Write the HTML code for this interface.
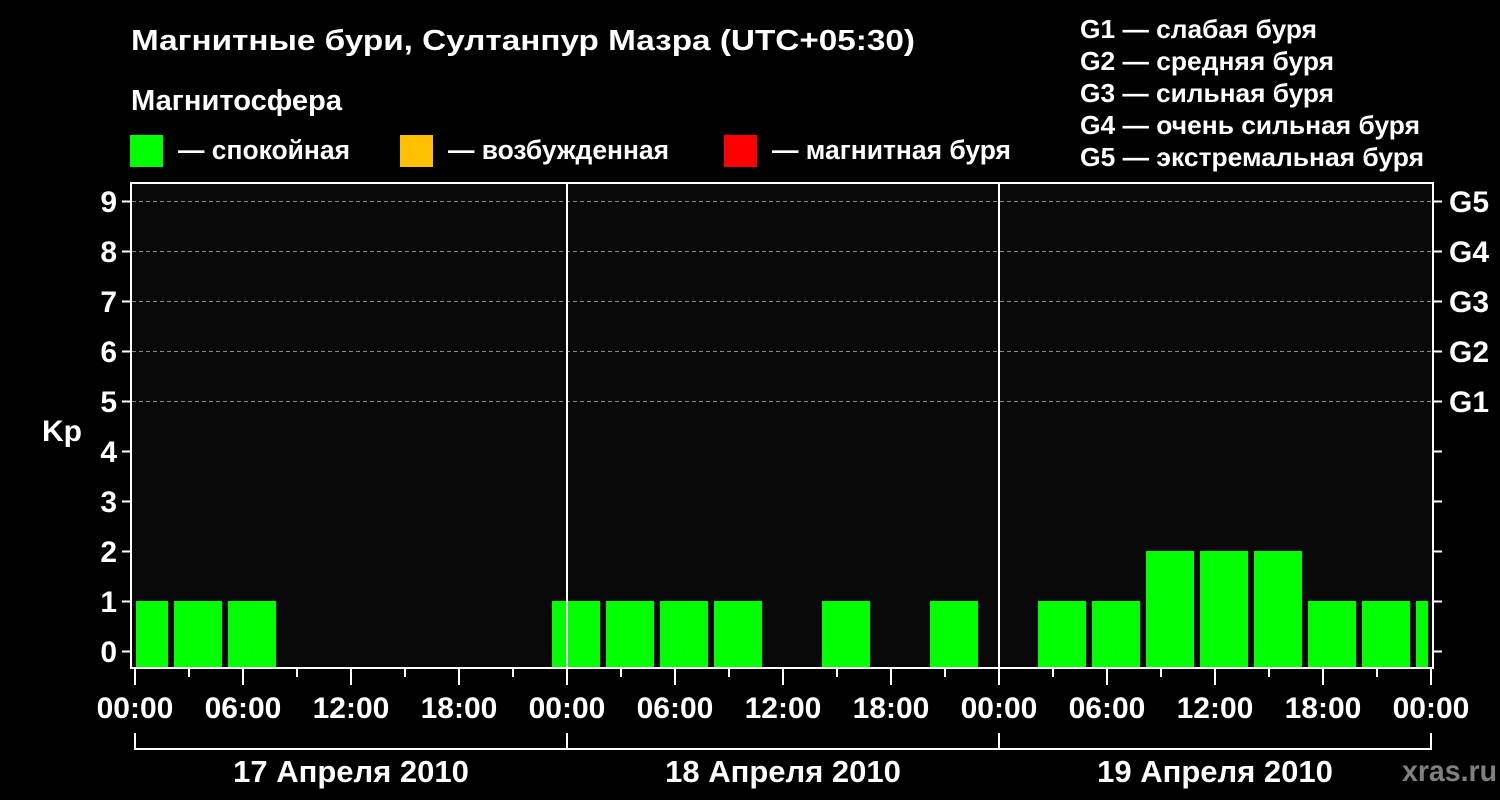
<!DOCTYPE html>
<html><head><meta charset="utf-8"><style>
html,body{margin:0;padding:0;background:#000;}
svg{display:block;}
text{font-family:"Liberation Sans",Arial,sans-serif;font-weight:bold;fill:#fff;}
</style></head><body>
<svg width="1500" height="800" viewBox="0 0 1500 800" xmlns="http://www.w3.org/2000/svg">
<rect width="1500" height="800" fill="#000"/>
<text x="131" y="50" font-size="29" textLength="784" lengthAdjust="spacingAndGlyphs">Магнитные бури, Султанпур Мазра (UTC+05:30)</text>
<text x="131" y="110" font-size="29" textLength="211" lengthAdjust="spacingAndGlyphs">Магнитосфера</text>
<rect x="130" y="135" width="33" height="32" fill="#00ff00"/>
<rect x="400" y="135" width="33" height="32" fill="#ffc000"/>
<rect x="724" y="135" width="33" height="32" fill="#ff0000"/>
<text x="178" y="159" font-size="27" textLength="172" lengthAdjust="spacingAndGlyphs">— спокойная</text>
<text x="448" y="159" font-size="27" textLength="221" lengthAdjust="spacingAndGlyphs">— возбужденная</text>
<text x="772" y="159" font-size="27" textLength="239" lengthAdjust="spacingAndGlyphs">— магнитная буря</text>
<g font-size="26">
<text x="1080" y="38" textLength="237" lengthAdjust="spacingAndGlyphs">G1 — слабая буря</text>
<text x="1080" y="70" textLength="254" lengthAdjust="spacingAndGlyphs">G2 — средняя буря</text>
<text x="1080" y="102" textLength="254" lengthAdjust="spacingAndGlyphs">G3 — сильная буря</text>
<text x="1080" y="134" textLength="340" lengthAdjust="spacingAndGlyphs">G4 — очень сильная буря</text>
<text x="1080" y="166" textLength="344" lengthAdjust="spacingAndGlyphs">G5 — экстремальная буря</text>
</g>
<rect x="131" y="183" width="1302" height="485" fill="#090909"/>
<g stroke="#888" stroke-width="1" stroke-dasharray="4,3">
<line x1="132" y1="201.5" x2="1432" y2="201.5"/>
<line x1="132" y1="251.5" x2="1432" y2="251.5"/>
<line x1="132" y1="301.5" x2="1432" y2="301.5"/>
<line x1="132" y1="351.5" x2="1432" y2="351.5"/>
<line x1="132" y1="401.5" x2="1432" y2="401.5"/>
</g>
<g fill="#00ff00">
<rect x="136" y="601" width="32" height="67"/>
<rect x="174" y="601" width="48" height="67"/>
<rect x="228" y="601" width="48" height="67"/>
<rect x="552" y="601" width="48" height="67"/>
<rect x="606" y="601" width="48" height="67"/>
<rect x="660" y="601" width="48" height="67"/>
<rect x="714" y="601" width="48" height="67"/>
<rect x="822" y="601" width="48" height="67"/>
<rect x="930" y="601" width="48" height="67"/>
<rect x="1038" y="601" width="48" height="67"/>
<rect x="1092" y="601" width="48" height="67"/>
<rect x="1146" y="551" width="48" height="117"/>
<rect x="1200" y="551" width="48" height="117"/>
<rect x="1254" y="551" width="48" height="117"/>
<rect x="1308" y="601" width="48" height="67"/>
<rect x="1362" y="601" width="48" height="67"/>
<rect x="1416" y="601" width="12" height="67"/>
</g>
<g stroke="#fff" stroke-width="2" fill="none">
<rect x="131" y="183" width="1302" height="485"/>
<line x1="567" y1="183" x2="567" y2="668"/>
<line x1="999" y1="183" x2="999" y2="668"/>
<path d="M122 201.5H131M122 251.5H131M122 301.5H131M122 351.5H131M122 401.5H131M122 451.5H131M122 501.5H131M122 551.5H131M122 601.5H131M122 651.5H131"/>
<path d="M1433 201.5H1442M1433 251.5H1442M1433 301.5H1442M1433 351.5H1442M1433 401.5H1442M1433 451.5H1442M1433 501.5H1442M1433 551.5H1442M1433 601.5H1442M1433 651.5H1442"/>
<path d="M135 668V685M189 668V677M243 668V685M297 668V677M351 668V685M405 668V677M459 668V685M513 668V677M567 668V685M621 668V677M675 668V685M729 668V677M783 668V685M837 668V677M891 668V685M945 668V677M999 668V685M1053 668V677M1107 668V685M1161 668V677M1215 668V685M1269 668V677M1323 668V685M1377 668V677M1431 668V685"/>
<path d="M135 733V749H1431V733M567 733V749M999 733V749"/>
</g>
<g font-size="30" text-anchor="end">
<text x="117" y="212">9</text><text x="117" y="262">8</text><text x="117" y="312">7</text><text x="117" y="362">6</text><text x="117" y="412">5</text>
<text x="117" y="462">4</text><text x="117" y="512">3</text><text x="117" y="562">2</text><text x="117" y="612">1</text><text x="117" y="662">0</text>
</g>
<text x="42" y="441" font-size="30">Kp</text>
<g font-size="30">
<text x="1449" y="212">G5</text><text x="1449" y="262">G4</text><text x="1449" y="312">G3</text><text x="1449" y="362">G2</text><text x="1449" y="412">G1</text>
</g>
<g font-size="30" text-anchor="middle">
<text x="135" y="718">00:00</text><text x="243" y="718">06:00</text><text x="351" y="718">12:00</text><text x="459" y="718">18:00</text>
<text x="567" y="718">00:00</text><text x="675" y="718">06:00</text><text x="783" y="718">12:00</text><text x="891" y="718">18:00</text>
<text x="999" y="718">00:00</text><text x="1107" y="718">06:00</text><text x="1215" y="718">12:00</text><text x="1323" y="718">18:00</text>
<text x="1431" y="718">00:00</text>
</g>
<g font-size="31" text-anchor="middle">
<text x="351" y="782">17 Апреля 2010</text>
<text x="783" y="782">18 Апреля 2010</text>
<text x="1215" y="782">19 Апреля 2010</text>
</g>
<text x="1402" y="781" font-size="30" style="fill:#808080" textLength="95" lengthAdjust="spacingAndGlyphs">xras.ru</text>
</svg>
</body></html>
